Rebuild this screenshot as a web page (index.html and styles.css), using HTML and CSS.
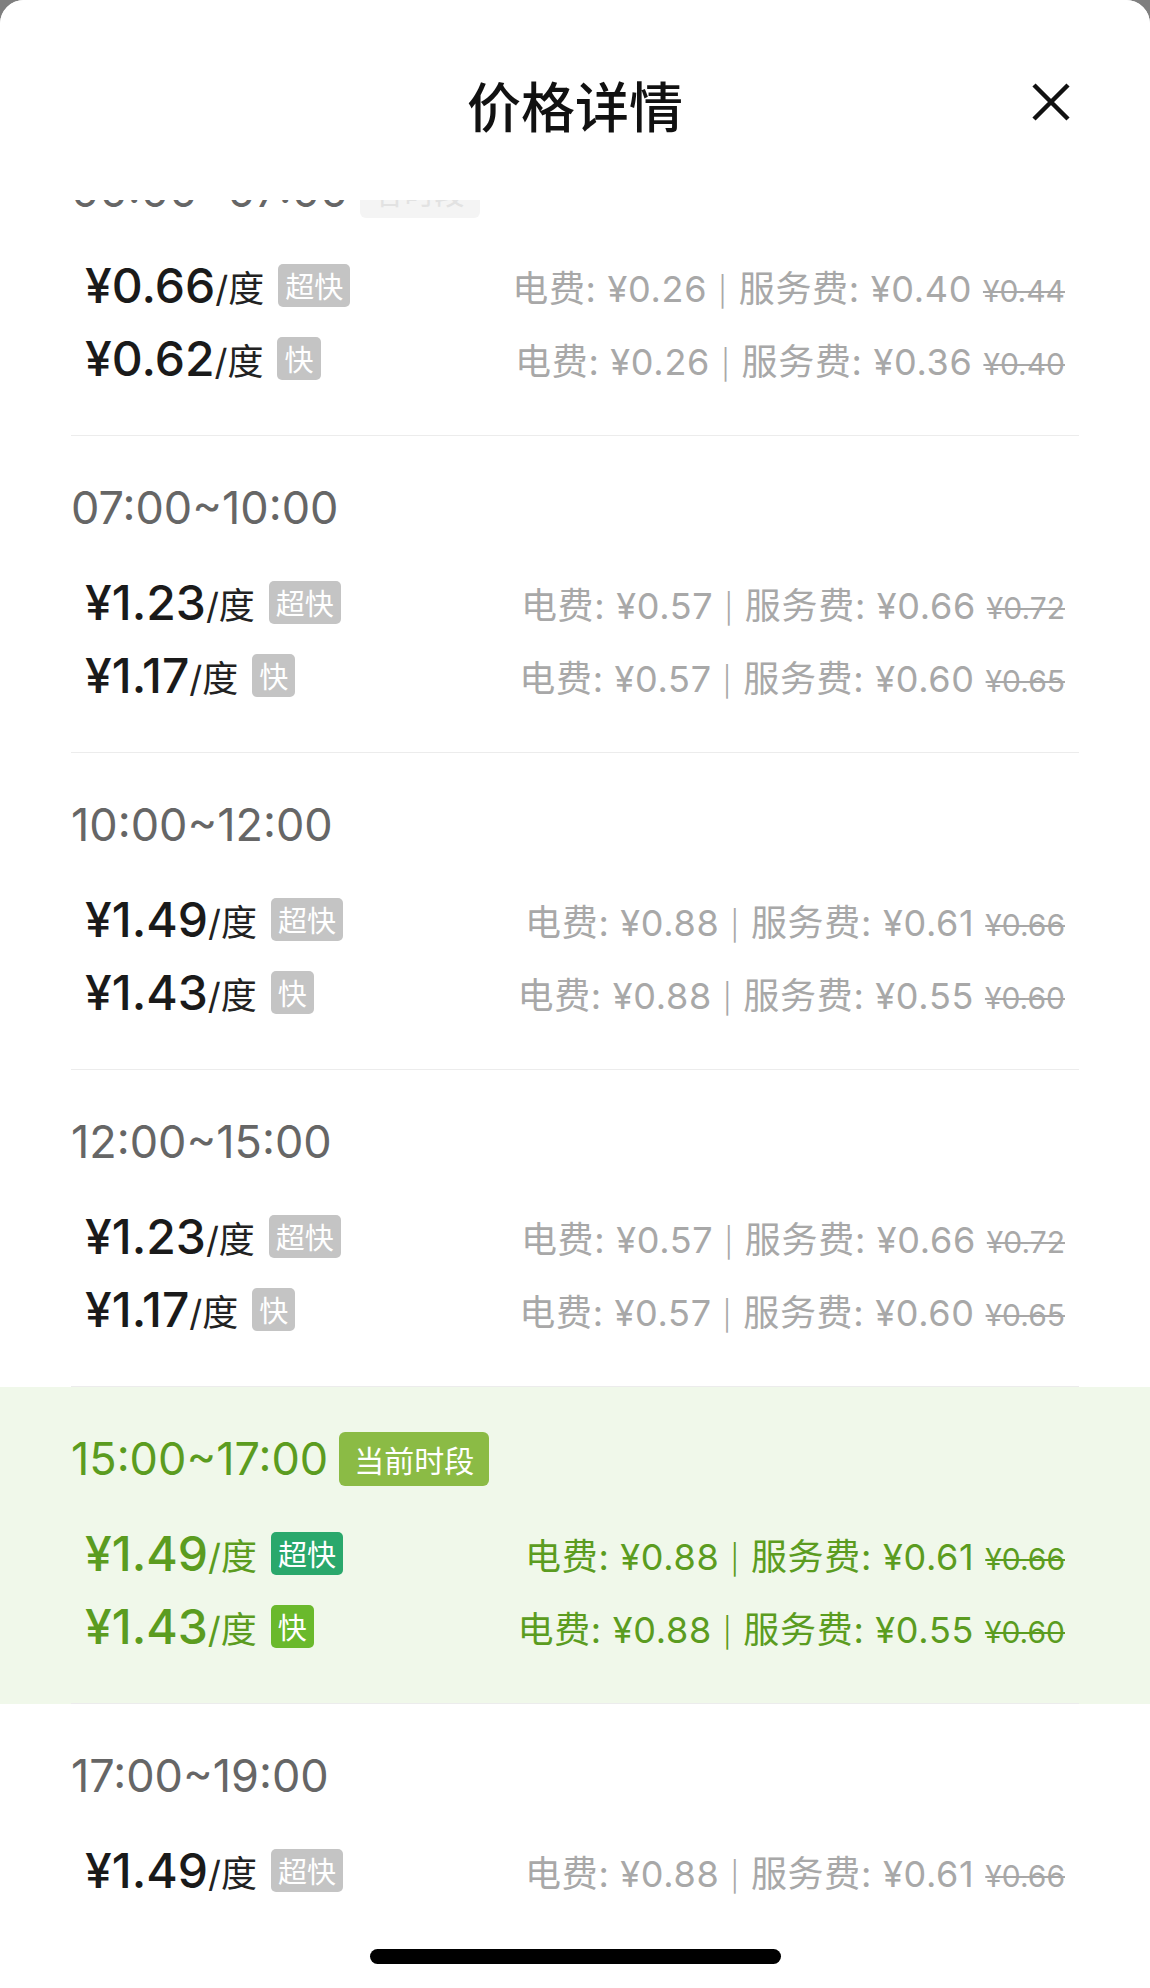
FILE: index.html
```html
<!DOCTYPE html>
<html>
<head>
    <title>价格详情</title>
    <link rel="stylesheet" href="styles.css">
</head>
<body>
    <div class="sheet">
        <div class="sheet-header">
            <h1 class="title">价格详情</h1>
            <button class="close" aria-label="关闭">
                <svg width="40" height="40" viewBox="0 0 40 40">
                    <path d="M3 3 L37 37 M37 3 L3 37" stroke="#111" stroke-width="4.5" fill="none"/>
                </svg>
            </button>
        </div>

        <div class="list">
            <div class="list-inner">
                <section class="period">
                    <div class="period-inner">
                        <div class="period-head">
                            <span class="period-time">00:00~07:00</span>
                            <span class="period-tag light">谷时段</span>
                        </div>
                        <div class="rows">
                            <div class="row">
                                <div class="price"><b>¥0.66</b>/度 <span class="speed">超快</span></div>
                                <div class="detail">电费: ¥0.26 <span class="sep">|</span> 服务费: ¥0.40 <s>¥0.44</s></div>
                            </div>
                            <div class="row">
                                <div class="price"><b>¥0.62</b>/度 <span class="speed">快</span></div>
                                <div class="detail">电费: ¥0.26 <span class="sep">|</span> 服务费: ¥0.36 <s>¥0.40</s></div>
                            </div>
                        </div>
                    </div>
                </section>

                <section class="period">
                    <div class="period-inner">
                        <div class="period-head">
                            <span class="period-time">07:00~10:00</span>
                        </div>
                        <div class="rows">
                            <div class="row">
                                <div class="price"><b>¥1.23</b>/度 <span class="speed">超快</span></div>
                                <div class="detail">电费: ¥0.57 <span class="sep">|</span> 服务费: ¥0.66 <s>¥0.72</s></div>
                            </div>
                            <div class="row">
                                <div class="price"><b>¥1.17</b>/度 <span class="speed">快</span></div>
                                <div class="detail">电费: ¥0.57 <span class="sep">|</span> 服务费: ¥0.60 <s>¥0.65</s></div>
                            </div>
                        </div>
                    </div>
                </section>

                <section class="period">
                    <div class="period-inner">
                        <div class="period-head">
                            <span class="period-time">10:00~12:00</span>
                        </div>
                        <div class="rows">
                            <div class="row">
                                <div class="price"><b>¥1.49</b>/度 <span class="speed">超快</span></div>
                                <div class="detail">电费: ¥0.88 <span class="sep">|</span> 服务费: ¥0.61 <s>¥0.66</s></div>
                            </div>
                            <div class="row">
                                <div class="price"><b>¥1.43</b>/度 <span class="speed">快</span></div>
                                <div class="detail">电费: ¥0.88 <span class="sep">|</span> 服务费: ¥0.55 <s>¥0.60</s></div>
                            </div>
                        </div>
                    </div>
                </section>

                <section class="period">
                    <div class="period-inner">
                        <div class="period-head">
                            <span class="period-time">12:00~15:00</span>
                        </div>
                        <div class="rows">
                            <div class="row">
                                <div class="price"><b>¥1.23</b>/度 <span class="speed">超快</span></div>
                                <div class="detail">电费: ¥0.57 <span class="sep">|</span> 服务费: ¥0.66 <s>¥0.72</s></div>
                            </div>
                            <div class="row">
                                <div class="price"><b>¥1.17</b>/度 <span class="speed">快</span></div>
                                <div class="detail">电费: ¥0.57 <span class="sep">|</span> 服务费: ¥0.60 <s>¥0.65</s></div>
                            </div>
                        </div>
                    </div>
                </section>

                <section class="period current">
                    <div class="period-inner">
                        <div class="period-head">
                            <span class="period-time">15:00~17:00</span>
                            <span class="period-tag">当前时段</span>
                        </div>
                        <div class="rows">
                            <div class="row">
                                <div class="price"><b>¥1.49</b>/度 <span class="speed super">超快</span></div>
                                <div class="detail">电费: ¥0.88 <span class="sep">|</span> 服务费: ¥0.61 <s>¥0.66</s></div>
                            </div>
                            <div class="row">
                                <div class="price"><b>¥1.43</b>/度 <span class="speed">快</span></div>
                                <div class="detail">电费: ¥0.88 <span class="sep">|</span> 服务费: ¥0.55 <s>¥0.60</s></div>
                            </div>
                        </div>
                    </div>
                </section>

                <section class="period">
                    <div class="period-inner">
                        <div class="period-head">
                            <span class="period-time">17:00~19:00</span>
                        </div>
                        <div class="rows">
                            <div class="row">
                                <div class="price"><b>¥1.49</b>/度 <span class="speed">超快</span></div>
                                <div class="detail">电费: ¥0.88 <span class="sep">|</span> 服务费: ¥0.61 <s>¥0.66</s></div>
                            </div>
                            <div class="row">
                                <div class="price"><b>¥1.43</b>/度 <span class="speed">快</span></div>
                                <div class="detail">电费: ¥0.88 <span class="sep">|</span> 服务费: ¥0.55 <s>¥0.60</s></div>
                            </div>
                        </div>
                    </div>
                </section>
            </div>
        </div>

        <div class="home-area">
            <span class="home-bar"></span>
        </div>
    </div>
</body>
</html>
```

FILE: styles.css
```css
html, body {
    margin: 0;
    height: 100%;
}

body {
    background-color: #7f7f7f;
    font-family: Inter, "Noto Sans CJK SC", sans-serif;
    overflow: hidden;
}

.sheet {
    height: 1988px;
    background: white;
    border-radius: 24px 24px 0 0;
    display: flex;
    flex-direction: column;
    overflow: hidden;
}

.sheet-header {
    height: 200px;
    flex-shrink: 0;
    display: grid;
    grid-template-columns: 1fr auto 1fr;
    align-items: start;
    background: white;
}

.title {
    grid-column: 2;
    margin: 67px 0 0;
    font-family: "Noto Sans CJK SC", sans-serif;
    font-size: 54px;
    font-weight: 500;
    line-height: 76px;
    color: #111;
}

.close {
    grid-column: 3;
    justify-self: end;
    margin: 82px 79px 0 0;
    padding: 0;
    width: 40px;
    height: 40px;
    border: none;
    background: none;
    cursor: pointer;
}

.close svg {
    display: block;
}

.list {
    flex: 1;
    overflow: hidden;
}

/* list is scrolled a little, first period sits under the header */
.list-inner {
    margin-top: -81px;
}

.period-inner {
    margin: 0 71px;
    padding: 42px 0 40px;
    border-bottom: 1px solid #ececec;
}

.period.current {
    background-color: #f0f8ea;
}

.period-head {
    display: flex;
    align-items: center;
    gap: 11px;
    height: 60px;
}

.period-time {
    font-size: 45px;
    line-height: 60px;
    color: #666;
}

.period-tag {
    font-family: "Noto Sans CJK SC", sans-serif;
    font-size: 30px;
    line-height: 54px;
    padding: 0 15px;
    border-radius: 6px;
    background-color: #8bbb45;
    color: white;
}

.period-tag.light {
    background-color: #f4f4f4;
    color: #e2e2e2;
}

.rows {
    margin-top: 28px;
}

.row {
    height: 73px;
    padding: 0 14px;
    display: flex;
    align-items: center;
    justify-content: space-between;
}

.price {
    display: flex;
    align-items: center;
    font-size: 36px;
    color: #222;
    white-space: nowrap;
}

.price b {
    font-size: 48px;
    font-weight: 500;
    color: #1a1a1a;
}

.speed {
    margin-left: 14px;
    padding: 0 7px;
    font-family: "Noto Sans CJK SC", sans-serif;
    font-size: 29px;
    line-height: 43px;
    border-radius: 5px;
    background-color: #c4c4c4;
    color: white;
}

.detail {
    font-size: 36px;
    letter-spacing: 0.7px;
    color: #a8a8a8;
    white-space: nowrap;
}

.detail .sep {
    font-size: 29px;
    font-weight: 300;
}

.detail s {
    font-size: 30px;
    letter-spacing: 0;
    text-decoration-thickness: 2px;
}

.current .period-time,
.current .price,
.current .price b,
.current .detail {
    color: #5b9c20;
}

.current .speed {
    background-color: #6ab92c;
}

.current .speed.super {
    background-color: #2aa86c;
}

.home-area {
    height: 84px;
    flex-shrink: 0;
    background: white;
    display: flex;
    justify-content: center;
    padding-top: 45px;
    box-sizing: border-box;
}

.home-bar {
    width: 411px;
    height: 15px;
    border-radius: 8px;
    background: black;
}
```
